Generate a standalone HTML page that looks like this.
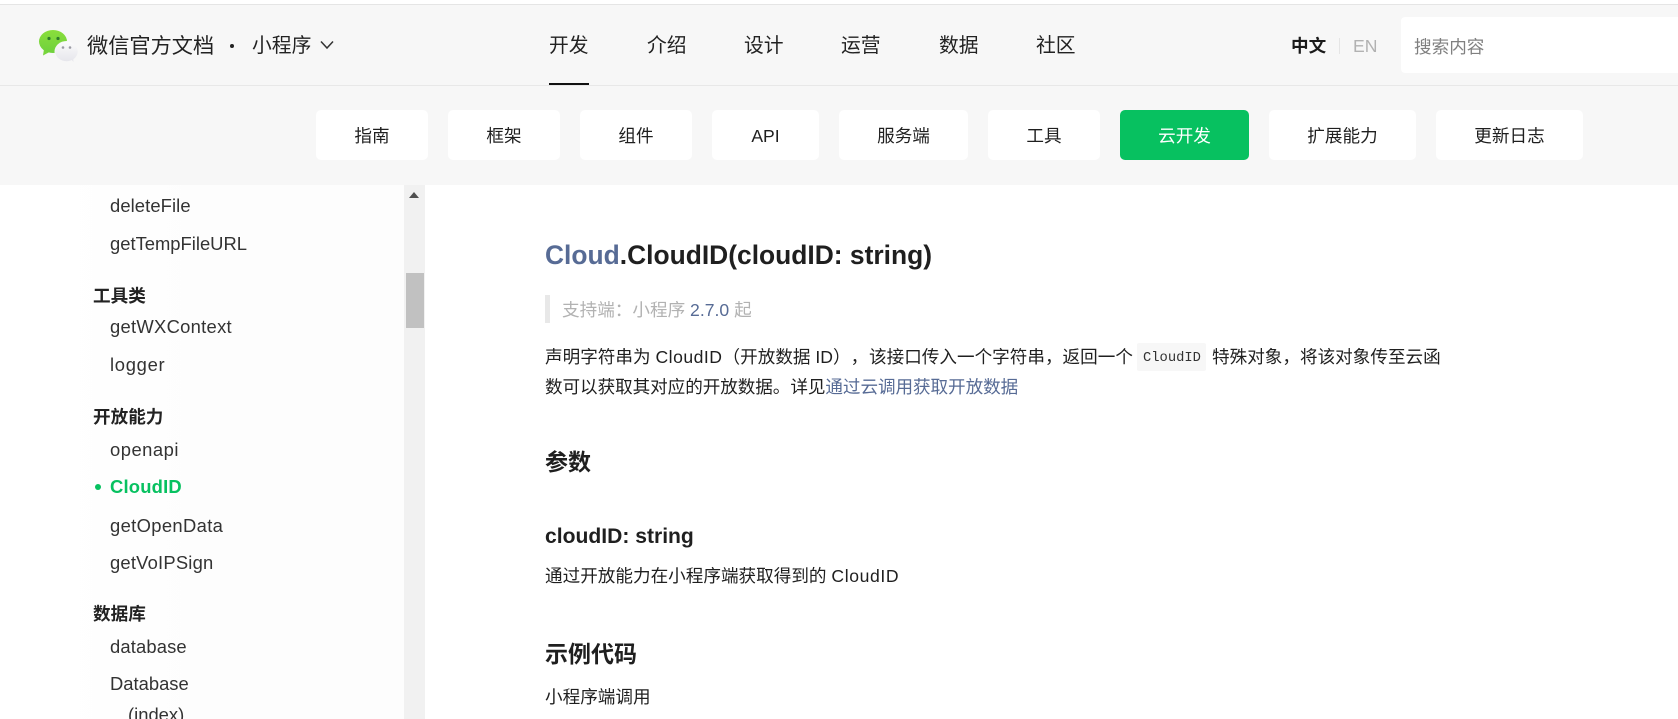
<!DOCTYPE html>
<html lang="zh-CN">
<head>
<meta charset="utf-8">
<title>Cloud.CloudID</title>
<style>
html,body{margin:0;padding:0;width:1678px;height:719px;overflow:hidden;background:#fff}
body{position:relative;font-family:"Liberation Sans","Noto Sans CJK SC",sans-serif;color:#1f1f1f;font-size:17.6px;text-spacing-trim:space-all}
.a{position:absolute;white-space:nowrap;line-height:40px;height:40px}
.b{position:absolute}
.btn{position:absolute;top:110px;height:50px;line-height:52px;background:#fff;border-radius:5px;text-align:center;font-size:17.6px;color:#1f1f1f}
.s{font-size:18.4px;left:110px;color:#333}
.h{font-size:17.6px;left:93px;font-weight:bold;color:#222}
.n{font-size:19.8px;color:#222}
.l{color:#576b95}
.c{letter-spacing:.5px}
</style>
</head>
<body>
<div class="b" style="left:0;top:0;width:1678px;height:185px;background:#f7f7f7"></div>
<div class="b" style="left:0;top:0;width:1678px;height:4px;background:#fff"></div>
<div class="b" style="left:0;top:4px;width:1678px;height:1px;background:#e5e5e5"></div>
<div class="b" style="left:0;top:85px;width:1678px;height:1px;background:#e8e8e8"></div>

<svg class="b" style="left:37px;top:28px" width="44" height="36" viewBox="0 0 44 36">
<defs>
<linearGradient id="g" x1="0" y1="0" x2="0" y2="1"><stop offset="0" stop-color="#8ade3c"/><stop offset="1" stop-color="#6fd13c"/></linearGradient>
<linearGradient id="w" x1="0" y1="0" x2="0" y2="1"><stop offset="0" stop-color="#fbfbfb"/><stop offset="1" stop-color="#e6e6ec"/></linearGradient>
</defs>
<path d="M7 21l-1 6.500 6.500-3.500z" fill="#78d63c"/>
<ellipse cx="16" cy="13.500" rx="14" ry="11.500" fill="url(#g)"/>
<circle cx="12" cy="10.500" r="1.600" fill="#2f7d2a"/><circle cx="21" cy="10.500" r="1.600" fill="#2f7d2a"/>
<ellipse cx="29.500" cy="23.500" rx="12" ry="10.500" fill="#f7f7f7"/>
<path d="M33 30l3.500 4-.5-6z" fill="#e6e6ec"/>
<ellipse cx="29.500" cy="23.500" rx="11.200" ry="9.800" fill="url(#w)"/>
<circle cx="26" cy="19.500" r="1.300" fill="#9a9aa3"/><circle cx="33" cy="19.500" r="1.300" fill="#9a9aa3"/>
</svg>

<div class="a n" style="left:87px;top:27px;font-size:21.200px">微信官方文档</div>
<div class="b" style="left:230px;top:44px;width:4px;height:4px;border-radius:50%;background:#222"></div>
<div class="a n" style="left:252px;top:26px">小程序</div>
<svg class="b" style="left:319px;top:39px" width="16" height="12" viewBox="0 0 16 12"><path d="M2 2.500l6 6.500 6-6.500" fill="none" stroke="#333" stroke-width="1.500"/></svg>

<div class="a n" style="left:549px;top:26px">开发</div>
<div class="a n" style="left:647px;top:26px">介绍</div>
<div class="a n" style="left:744px;top:26px">设计</div>
<div class="a n" style="left:841px;top:26px">运营</div>
<div class="a n" style="left:939px;top:26px">数据</div>
<div class="a n" style="left:1036px;top:26px">社区</div>
<div class="b" style="left:549px;top:83px;width:40px;height:2px;background:#111"></div>

<div class="a" style="left:1291px;top:26px;font-weight:bold;color:#1a1a1a">中文</div>
<div class="b" style="left:1339px;top:38px;width:1px;height:16px;background:#e5e5e5"></div>
<div class="a" style="left:1353px;top:26px;color:#b2b2b2">EN</div>
<div class="b" style="left:1401px;top:17px;width:277px;height:56px;background:#fff;border-radius:4px 0 0 4px"></div>
<div class="a" style="left:1414px;top:27px;color:#808080">搜索内容</div>

<div class="btn" style="left:316px;width:112px">指南</div>
<div class="btn" style="left:448px;width:112px">框架</div>
<div class="btn" style="left:580px;width:112px">组件</div>
<div class="btn" style="left:712px;width:107px">API</div>
<div class="btn" style="left:839px;width:129px">服务端</div>
<div class="btn" style="left:988px;width:112px">工具</div>
<div class="btn" style="left:1120px;width:129px;background:#07c160;color:#fff">云开发</div>
<div class="btn" style="left:1269px;width:147px">扩展能力</div>
<div class="btn" style="left:1436px;width:147px">更新日志</div>

<div class="b" style="left:0;top:185px;width:404px;height:534px;background:linear-gradient(90deg,#fff 0,#fff 60px,#fdfdfd 200px,#fdfdfd 100%)"></div>
<div class="b" style="left:404px;top:185px;width:21px;height:534px;background:#f1f1f1"></div>
<div class="b" style="left:409px;top:192px;width:0;height:0;border-left:5.500px solid transparent;border-right:5.500px solid transparent;border-bottom:6px solid #505050"></div>
<div class="b" style="left:406px;top:273px;width:18px;height:55px;background:#c1c1c1"></div>

<div class="a s" style="top:186px;letter-spacing:.09px">deleteFile</div>
<div class="a s" style="top:224px">getTempFileURL</div>
<div class="a h" style="top:276px">工具类</div>
<div class="a s" style="top:307px;letter-spacing:.28px">getWXContext</div>
<div class="a s" style="top:345px;letter-spacing:.7px">logger</div>
<div class="a h" style="top:397px">开放能力</div>
<div class="a s" style="top:430px;letter-spacing:.5px">openapi</div>
<div class="b" style="left:95px;top:484px;width:6px;height:6px;border-radius:50%;background:#07c160"></div>
<div class="a s" style="top:467px;color:#07c160;font-weight:bold;letter-spacing:.2px">CloudID</div>
<div class="a s" style="top:506px;letter-spacing:.35px">getOpenData</div>
<div class="a s" style="top:543px;letter-spacing:.2px">getVoIPSign</div>
<div class="a h" style="top:594px">数据库</div>
<div class="a s" style="top:627px;letter-spacing:.14px">database</div>
<div class="a s" style="top:664px">Database</div>
<div class="a s" style="left:128px;top:695px">(index)</div>

<div class="a" style="left:545px;top:235px;font-size:26.400px;font-weight:bold;color:#1f1f1f"><span class="l">Cloud</span>.CloudID(cloudID: string)</div>
<div class="b" style="left:545px;top:295px;width:5px;height:28px;background:#e8e8e8"></div>
<div class="a" style="left:562px;top:290px;color:#b2b2b2">支持端：小程序 <span class="l">2.7.0</span> 起</div>

<div class="a" style="left:545px;top:337px">声明字符串为 <span class="c">CloudID</span>（开放数据 ID），</div>
<div class="a" style="left:869px;top:337px">该接口传入一个字符串，返回一个</div>
<div class="b" style="left:1137px;top:343px;width:69px;height:28px;background:#f7f7f7;border-radius:2px"></div>
<div class="a" style="left:1143px;top:339px;font-family:'Liberation Mono',monospace;font-size:13.800px;color:#333">CloudID</div>
<div class="a" style="left:1212px;top:337px">特殊对象，将该对象传至云函</div>
<div class="a" style="left:545px;top:367px;letter-spacing:-.07px">数可以获取其对应的开放数据。详见<span class="l">通过云调用获取开放数据</span></div>

<div class="a" style="left:545px;top:442px;font-size:23px;font-weight:bold">参数</div>
<div class="a" style="left:545px;top:517px;font-size:21.100px;font-weight:bold">cloudID: string</div>
<div class="a" style="left:545px;top:556px">通过开放能力在小程序端获取得到的 <span style="letter-spacing:.6px">CloudID</span></div>
<div class="a" style="left:545px;top:634px;font-size:23px;font-weight:bold">示例代码</div>
<div class="a" style="left:545px;top:677px">小程序端调用</div>
</body>
</html>
